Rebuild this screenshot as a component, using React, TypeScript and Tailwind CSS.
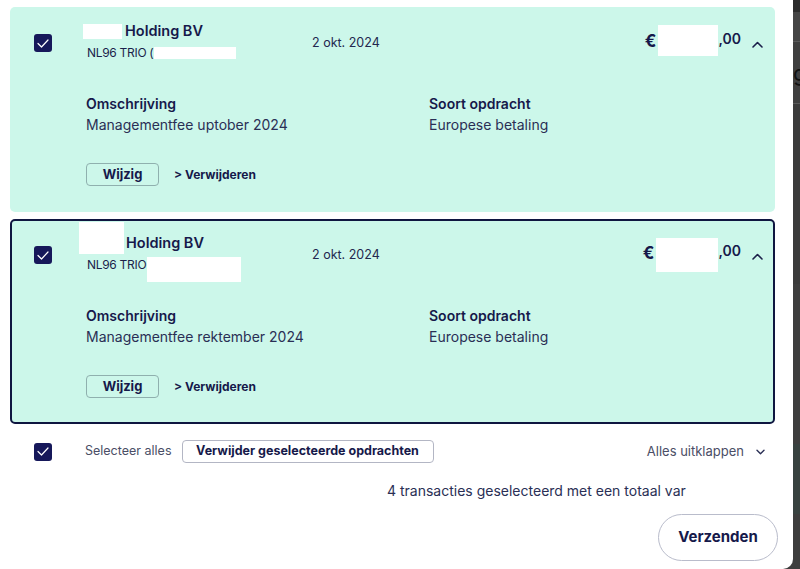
import React from "react";

const Check = () => (
  <div className="w-[18px] h-[18px] rounded-[3px] bg-[#16185a] flex items-center justify-center shrink-0">
    <svg width="12" height="9" viewBox="0 0 12 9" fill="none">
      <path d="M1 4.5 L4.5 8 L11 1" stroke="#ffffff" strokeWidth="1.2" strokeLinecap="round" strokeLinejoin="round" />
    </svg>
  </div>
);

const ChevronUp = () => (
  <svg width="11" height="7" viewBox="0 0 11 7" fill="none">
    <path d="M1 6 L5.5 1.5 L10 6" stroke="#1b1f4a" strokeWidth="1.6" strokeLinecap="round" strokeLinejoin="round" />
  </svg>
);

const ChevronDown = () => (
  <svg width="9" height="6" viewBox="0 0 9 6" fill="none">
    <path d="M1 1.2 L4.5 4.7 L8 1.2" stroke="#2a2f55" strokeWidth="1.4" strokeLinecap="round" strokeLinejoin="round" />
  </svg>
);

type CardProps = {
  selected?: boolean;
  desc: string;
  nameBox: string;
  ibanBox: string;
  ibanText: string;
  amountBox: string;
};

const Card = ({ selected, desc, nameBox, ibanBox, ibanText, amountBox }: CardProps) => (
  <div
    className={
      "rounded-[5px] border-2 bg-[#ccf7ea] pt-[9px] pb-[24px] pl-[22px] pr-[10px] " +
      (selected ? "border-[#0f1640]" : "border-transparent")
    }
  >
    <div className="flex items-center h-[50px]">
      <Check />
      <div className="ml-[34px] w-[226px] flex flex-col self-start mt-[3px]">
        <div className="relative h-[20px] flex items-center text-[14.5px] font-semibold text-[#16194a] leading-[20px]">
          <span className={nameBox} />
          <span>Holding BV</span>
        </div>
        <div className="relative mt-[4px] h-[16px] flex items-center text-[12px] text-[#1b1f4a] leading-[16px] tracking-[-0.3px]">
          <span className="ml-[1px]">{ibanText}</span>
          <span className={ibanBox} />
        </div>
      </div>
      <div className="text-[12.5px] text-[#23284f] mt-[1px]">2 okt. 2024</div>
      <div className="flex-1" />
      <div className="flex items-center -mt-[2px]">
        <span className="text-[17px] font-bold text-[#16194a]">€</span>
        <span className={amountBox} />
        <span className="text-[14px] font-semibold text-[#16194a] -mt-[8px]">,00</span>
        <span className="ml-[11px] mt-[4px]">
          <ChevronUp />
        </span>
      </div>
    </div>
    <div className="mt-[26px] ml-[52px] flex">
      <div className="w-[343px]">
        <div className="text-[14px] font-semibold text-[#16194a] leading-[20px]">Omschrijving</div>
        <div className="mt-[1px] text-[14px] text-[#2a2f55] leading-[20px]">{desc}</div>
      </div>
      <div>
        <div className="text-[14px] font-semibold text-[#16194a] leading-[20px]">Soort opdracht</div>
        <div className="mt-[1px] text-[14px] text-[#2a2f55] leading-[20px]">Europese betaling</div>
      </div>
    </div>
    <div className="mt-[28px] ml-[52px] flex items-center">
      <button className="w-[73px] h-[23px] rounded-[4px] border-[1.5px] border-[#8fb0ae] text-[13px] font-bold text-[#16194a] flex items-center justify-center">
        Wijzig
      </button>
      <span className="ml-[15px] text-[12px] font-bold text-[#16194a]">&gt; Verwijderen</span>
    </div>
  </div>
);

export default function App() {
  return (
    <div
      className="flex w-[800px] h-[569px] overflow-hidden bg-[#3e3e3e]"
      style={{ fontFamily: "Inter, 'Liberation Sans', sans-serif" }}
    >
      <div className="w-[793px] h-full bg-white rounded-br-[10px] pl-[10px] pr-[18px] pt-[7px] shrink-0">
        <Card
          desc="Managementfee uptober 2024"
          ibanText="NL96 TRIO ("
          nameBox="inline-block bg-white w-[39px] h-[15px] -ml-[3px] mr-[3px]"
          ibanBox="inline-block bg-white w-[82px] h-[12px] ml-[1px]"
          amountBox="inline-block bg-white w-[60px] h-[31px] ml-[2px] -mt-[4px]"
        />
        <div className="h-[7px]" />
        <Card
          selected
          desc="Managementfee rektember 2024"
          ibanText="NL96 TRIO"
          nameBox="inline-block bg-white w-[45px] h-[32px] -ml-[7px] mr-[2px] -mt-[10px]"
          ibanBox="inline-block bg-white w-[94px] h-[25px] ml-[1px] mt-[8px]"
          amountBox="inline-block bg-white w-[62px] h-[34px] ml-[2px] mt-[2px]"
        />
        <div className="mt-[16px] flex items-center h-[23px] pl-[24px] pr-[10px]">
          <Check />
          <span className="ml-[33px] text-[12.5px] text-[#4a4e66]">Selecteer alles</span>
          <button className="ml-[10px] w-[252px] h-[23px] rounded-[4px] border-[1.5px] border-[#b3b6c4] text-[12.5px] font-bold text-[#16194a] flex items-center justify-center">
            Verwijder geselecteerde opdrachten
          </button>
          <div className="flex-1" />
          <span className="text-[13px] text-[#4a4e66]">Alles uitklappen</span>
          <span className="ml-[12px]">
            <ChevronDown />
          </span>
        </div>
        <div className="mt-[18px] pl-[377px] text-[14px] text-[#2a2f55] leading-[20px] whitespace-nowrap">
          4 transacties geselecteerd met een totaal var
        </div>
        <div className="mt-[13px] flex justify-end">
          <button className="mr-[-3px] w-[120px] h-[47px] rounded-full border-[1.5px] border-[#b9bccb] text-[15px] font-bold text-[#16194a]">
            Verzenden
          </button>
        </div>
      </div>
      <div className="flex-1 flex flex-col">
        <div className="h-[12px] bg-[#2c2c2c]" />
        <div className="h-[30px] bg-[#454545] border-b border-[#5a5a5a]" />
        <div className="h-[62px] bg-[#3f3f3f] border-b border-[#5a5a5a] flex items-center text-[22px] text-[#111] leading-none">
          g
        </div>
        <div className="h-[180px] bg-[#3b3b3b]" />
        <div className="h-[160px] bg-[#3e3e3e]" />
        <div className="h-[70px] bg-[#384240]" />
        <div className="flex-1 bg-[#3d3d3d]" />
      </div>
    </div>
  );
}
